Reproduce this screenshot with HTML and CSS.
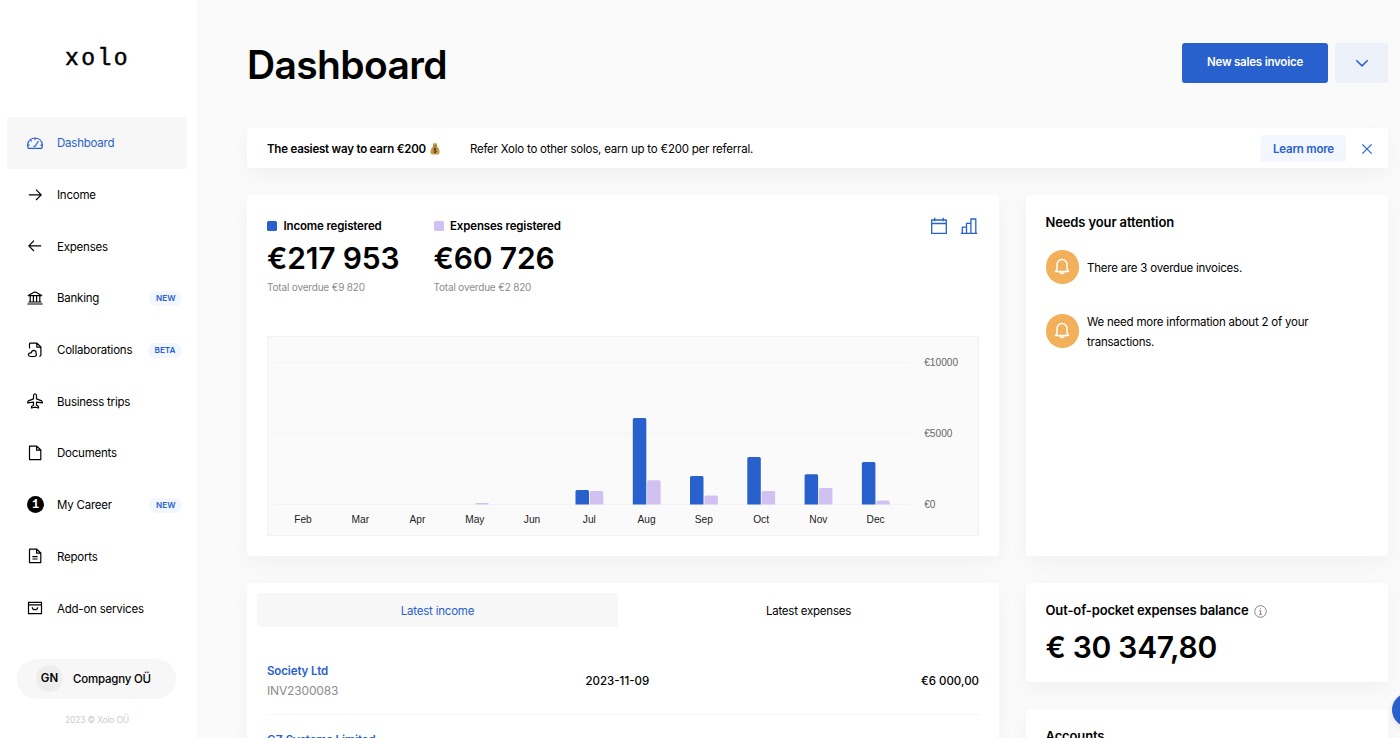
FILE: index.html
```html
<!DOCTYPE html>
<html lang="en">
<head>
    <meta charset="UTF-8">
    <meta name="viewport" content="width=device-width, initial-scale=1.0">
    <title>Dashboard</title>
    <link rel="stylesheet" href="styles.css">
</head>
<body>
    <aside class="sidebar">
        <div class="logo">xolo</div>

        <nav class="menu">
            <a class="menu-item active">
                <svg class="icon" viewBox="0 0 16 16"><path d="M1.400 13.300q-1-1.500-.7-3.700C1.200 5.600 4.300 3 8 3s6.800 2.600 7.300 6.600q.3 2.200-.7 3.700zM8 3v2M3.500 5.200l1.200 1.200M.8 10.200h1.700M13.500 10.200h1.700M6.700 10.800q.3 1 1.400.5l3.400-5.300"/></svg>
                <span class="label">Dashboard</span>
            </a>
            <a class="menu-item">
                <svg class="icon" viewBox="0 0 16 16"><path d="M1.800 7.800h12.400M9 2.600l5.200 5.200L9 13"/></svg>
                <span class="label">Income</span>
            </a>
            <a class="menu-item">
                <svg class="icon" viewBox="0 0 16 16"><path d="M14.200 7.800H1.800M7 2.600L1.800 7.800 7 13"/></svg>
                <span class="label">Expenses</span>
            </a>
            <a class="menu-item">
                <svg class="icon" viewBox="0 0 16 16"><path d="M.3 14h15.400M1.500 12h13M1.300 5.600h13.400L9 2.300q-1-.5-2 0zM3.200 5.600V12M6.400 5.600V12M9.600 5.600V12M12.800 5.600V12"/></svg>
                <span class="label">Banking</span>
                <span class="tag">NEW</span>
            </a>
            <a class="menu-item">
                <svg class="icon" viewBox="0 0 16 16"><path d="M2.500 6.500V2q0-.8.8-.8H10l3.900 3.700v8.200q0 1.100-1.600 1.300M9.800 1.400v3.700h3.900M3.300 14.500h4.400a2 2 0 0 0 1.300-3.200q.4-2.700-2-3-2.400 0-2.700 2.500-2.800-.2-3 1.700.1 1.800 2 2z"/></svg>
                <span class="label">Collaborations</span>
                <span class="tag">BETA</span>
            </a>
            <a class="menu-item">
                <svg class="icon" viewBox="0 0 16 16"><path d="M8 .9c-1 0-1.500.9-1.500 2v3L1.300 7.900q-.7.500-.7 1.900l5.900-.7v3l-2 1.500v1.400L8 14.200l3.500.8v-1.400l-2-1.500v-3l5.900.7q0-1.400-.7-1.900L9.500 5.900v-3c0-1.100-.5-2-1.500-2z"/></svg>
                <span class="label">Business trips</span>
            </a>
            <a class="menu-item">
                <svg class="icon" viewBox="0 0 16 16"><path d="M2.500 1.200h7.300l4 3.800v9.600H2.500zM9.600 1.300v3.900h4"/></svg>
                <span class="label">Documents</span>
            </a>
            <a class="menu-item">
                <span class="career">1</span>
                <span class="label">My Career</span>
                <span class="tag">NEW</span>
            </a>
            <a class="menu-item">
                <svg class="icon" viewBox="0 0 16 16"><path d="M2.500 1.200h7.300l4 3.800v9.600H2.500zM9.600 1.300v3.900h4M5.400 8.600h5.200M5.400 11h5.200"/></svg>
                <span class="label">Reports</span>
            </a>
            <a class="menu-item">
                <svg class="icon" viewBox="0 0 16 16"><path d="M1.500 2.300h13v11.400h-13zM1.500 4.800h13M5.300 7.200a2.700 2.500 0 0 0 5.400 0"/></svg>
                <span class="label">Add-on services</span>
            </a>
        </nav>

        <div class="company">
            <span class="avatar">GN</span>
            <span>Compagny OÜ</span>
        </div>
        <p class="copyright">2023 © Xolo OÜ</p>
    </aside>

    <main class="content">
        <header class="page-header">
            <h1>Dashboard</h1>
            <div class="actions">
                <button class="btn-primary">New sales invoice</button>
                <button class="btn-more">
                    <svg width="14" height="14" viewBox="0 0 14 14"><path d="M1.300 4.300L7 9.900l5.700-5.600"/></svg>
                </button>
            </div>
        </header>

        <!-- Referral banner -->
        <section class="card banner">
            <strong>The easiest way to earn €200</strong>
            <svg class="moneybag" width="10" height="12" viewBox="0 0 10 12">
                <path fill="#c39c4c" d="M2.700.6q2.300-.8 4.600 0L6.600 2.700Q9.600 5.500 9.600 9q0 2.600-2.200 2.600H2.600Q.4 11.600.4 9q0-3.500 3-6.300z"/>
                <path fill="#7d6230" d="M3 2.400h4v.9H3z"/>
                <path fill="none" stroke="#3f3010" stroke-width=".8" d="M6.500 5.900Q5 5 3.900 5.900q-.5 1.100 1.100 1.500 1.800.4 1.400 1.500-1.400 1.100-3 0M5 4.600v5.600"/>
            </svg>
            <span class="banner-text">Refer Xolo to other solos, earn up to €200 per referral.</span>
            <button class="btn-light">Learn more</button>
            <svg class="close" width="12" height="12" viewBox="0 0 12 12"><path d="M1.300 1.300l9.400 9.400M10.700 1.300l-9.400 9.400"/></svg>
        </section>

        <div class="grid">
            <div class="column">
                <section class="card overview">
                    <div class="totals">
                        <div class="total">
                            <h3><i class="dot income"></i>Income registered</h3>
                            <p class="amount">€217 953</p>
                            <p class="overdue">Total overdue €9 820</p>
                        </div>
                        <div class="total">
                            <h3><i class="dot expenses"></i>Expenses registered</h3>
                            <p class="amount">€60 726</p>
                            <p class="overdue">Total overdue €2 820</p>
                        </div>
                        <div class="tools">
                            <svg width="18" height="18" viewBox="0 0 18 18"><path d="M1.700 3h14.600v13.400H1.700zM1.700 6.500h14.600M4.700.8v3.400M13.300.8v3.400"/></svg>
                            <svg width="18" height="18" viewBox="0 0 18 18"><path d="M.8 16.400h16.400M2.300 16.400v-6.200h4.200v6.200M6.500 16.400V6.300h4.400v10.100M10.900 16.400V2h4.900v14.400"/></svg>
                        </div>
                    </div>

                    <svg class="chart" width="712" height="200" viewBox="1 1 710 198">
                        <g class="lines">
                            <path d="M7 26.500h637M7 97.500h637M7 168.500h637"/>
                        </g>
                        <g class="bar-income">
                            <path d="M308.500 168.500v-13q0-1.500 1.500-1.500h10.500q1.500 0 1.500 1.500v13z"/>
                            <path d="M365.800 168.500v-85q0-1.500 1.500-1.500h10.500q1.500 0 1.500 1.500v85z"/>
                            <path d="M423 168.500v-27q0-1.500 1.500-1.500H435q1.500 0 1.500 1.500v27z"/>
                            <path d="M480.300 168.500v-46q0-1.500 1.500-1.500h10.500q1.500 0 1.500 1.500v46z"/>
                            <path d="M537.600 168.500v-28.700q0-1.500 1.500-1.500h10.500q1.500 0 1.500 1.500v28.700z"/>
                            <path d="M594.900 168.500v-41q0-1.500 1.500-1.500h10.500q1.500 0 1.500 1.500v41z"/>
                        </g>
                        <g class="bar-expenses">
                            <path d="M208.300 168.500v-.5q0-1 1-1h11.500q1 0 1 1v.5z"/>
                            <path d="M322.800 168.500v-12q0-1.500 1.500-1.500h10.500q1.500 0 1.500 1.500v12z"/>
                            <path d="M380.100 168.500v-22.700q0-1.500 1.500-1.500h10.500q1.500 0 1.500 1.500v22.700z"/>
                            <path d="M437.400 168.500v-7.500q0-1.500 1.500-1.500h10.500q1.500 0 1.500 1.500v7.500z"/>
                            <path d="M494.600 168.500v-12q0-1.500 1.500-1.500h10.500q1.500 0 1.500 1.500v12z"/>
                            <path d="M551.900 168.500v-15q0-1.500 1.500-1.500h10.500q1.500 0 1.500 1.500v15z"/>
                            <path d="M609.200 168.500v-2.500q0-1.500 1.500-1.500h10.500q1.500 0 1.500 1.500v2.500z"/>
                        </g>
                        <g class="months">
                            <text x="36" y="187">Feb</text>
                            <text x="93.300" y="187">Mar</text>
                            <text x="150.500" y="187">Apr</text>
                            <text x="207.800" y="187">May</text>
                            <text x="265" y="187">Jun</text>
                            <text x="322.300" y="187">Jul</text>
                            <text x="379.600" y="187">Aug</text>
                            <text x="436.900" y="187">Sep</text>
                            <text x="494.100" y="187">Oct</text>
                            <text x="551.400" y="187">Nov</text>
                            <text x="608.600" y="187">Dec</text>
                        </g>
                        <g class="scale">
                            <text x="657.200" y="30">€10000</text>
                            <text x="657.200" y="101">€5000</text>
                            <text x="657.200" y="172">€0</text>
                        </g>
                    </svg>
                </section>

                <section class="card latest">
                    <div class="tabs">
                        <a class="tab active">Latest income</a>
                        <a class="tab">Latest expenses</a>
                    </div>
                    <div class="invoice">
                        <div>
                            <a class="client">Society Ltd</a>
                            <p class="number">INV2300083</p>
                        </div>
                        <span class="date">2023-11-09</span>
                        <span class="sum">€6 000,00</span>
                    </div>
                    <div class="invoice">
                        <div>
                            <a class="client">GZ Systems Limited</a>
                        </div>
                    </div>
                </section>
            </div>

            <div class="column">
                <section class="card attention">
                    <h2>Needs your attention</h2>
                    <div class="alert">
                        <span class="bell"><svg width="18" height="18" viewBox="0 0 18 18"><path d="M2.500 13.400h13L14 11.200V6.500a5 5 0 0 0-10 0v4.700zM7 13.600a2 2 0 0 0 4 0"/></svg></span>
                        <p>There are 3 overdue invoices.</p>
                    </div>
                    <div class="alert">
                        <span class="bell"><svg width="18" height="18" viewBox="0 0 18 18"><path d="M2.500 13.400h13L14 11.200V6.500a5 5 0 0 0-10 0v4.700zM7 13.600a2 2 0 0 0 4 0"/></svg></span>
                        <p>We need more information about 2 of your transactions.</p>
                    </div>
                </section>

                <section class="card balance">
                    <h2>Out-of-pocket expenses balance
                        <svg class="info" width="13" height="13" viewBox="0 0 13 13"><circle cx="6.500" cy="6.500" r="5.800"/><path d="M5.300 5.700h1.300v3.600M5.200 9.400h2.700M6.500 3.300v1"/></svg>
                    </h2>
                    <p class="amount">€ 30 347,80</p>
                </section>

                <section class="card accounts">
                    <h2>Accounts</h2>
                </section>
            </div>
        </div>
    </main>

    <div class="chat"></div>
</body>
</html>
```
FILE: styles.css
```css
* {
    box-sizing: border-box;
}
body {
    margin: 0;
    height: 738px;
    overflow: hidden;
    display: flex;
    font-family: Inter, "Liberation Sans", sans-serif;
    font-size: 11.5px;
    letter-spacing: -0.22px;
    color: #000;
    background-color: #fafafa;
}
h1, h2, h3, p {
    margin: 0;
}
svg {
    flex: none;
    fill: none;
    stroke-linejoin: round;
}
button {
    border: none;
    font-family: inherit;
    font-size: 11.5px;
    font-weight: 600;
    letter-spacing: inherit;
    cursor: pointer;
}

/* Sidebar */
.sidebar {
    width: 197px;
    flex: none;
    background-color: #fff;
}
.logo {
    height: 117px;
    padding: 43px 2px 0 0;
    font-family: "Liberation Mono", monospace;
    font-size: 23px;
    line-height: 33px;
    letter-spacing: 2.4px;
    text-align: center;
    -webkit-text-stroke: 0.5px #000;
}
.menu {
    padding: 0 10px 0 7px;
}
.menu-item {
    display: flex;
    align-items: center;
    height: 51.7px;
    padding: 0 5px 0 20px;
    border-radius: 3px;
}
.menu-item.active {
    background-color: #f7f7f7;
    color: #2860ce;
}
.icon {
    width: 16px;
    height: 16px;
    margin-right: 14px;
    stroke: currentColor;
    stroke-width: 1.2;
}
.label {
    padding-top: 1px;
}
.career {
    width: 17px;
    height: 17px;
    margin-right: 13px;
    border-radius: 50%;
    background-color: #000;
    color: #fff;
    font-family: "Liberation Mono", monospace;
    font-size: 12px;
    font-weight: bold;
    line-height: 19px;
    letter-spacing: 0;
    text-align: center;
}
.tag {
    margin: 1px 0 0 auto;
    padding: 0 6.5px;
    border-radius: 8px;
    background-color: #f2f6fe;
    color: #2860ce;
    font-size: 8.2px;
    font-weight: 600;
    line-height: 15px;
    letter-spacing: 0;
}
.company {
    display: flex;
    align-items: center;
    width: 159px;
    height: 40px;
    margin: 25px 0 0 17px;
    padding-left: 19px;
    border-radius: 20px;
    background-color: #f7f7f7;
    font-weight: 500;
}
.avatar {
    width: 27px;
    margin-right: 10px;
    border-radius: 50%;
    background-color: #eee;
    font-weight: 600;
    line-height: 27px;
    letter-spacing: 0;
    text-align: center;
}
.copyright {
    margin-top: 15px;
    padding-right: 3px;
    color: #ccc;
    font-size: 8.5px;
    line-height: 12px;
    letter-spacing: -0.2px;
    text-align: center;
}

/* Content */
.content {
    flex: 1;
    padding: 43px 12px 0 50px;
}
.page-header {
    display: flex;
    justify-content: space-between;
    height: 85px;
}
h1 {
    font-size: 39px;
    font-weight: 600;
    line-height: 43px;
    letter-spacing: -0.65px;
}
.actions {
    display: flex;
    gap: 7px;
    height: 40px;
}
.btn-primary {
    width: 146px;
    padding-bottom: 4px;
    border-radius: 3px;
    background-color: #2860ce;
    color: #fff;
}
.btn-more {
    width: 53px;
    padding: 2px 0 0;
    border-radius: 3px;
    background-color: #edf1fa;
    stroke: #2860ce;
    stroke-width: 1.5;
}
.card {
    border-radius: 3px;
    background-color: #fff;
    box-shadow: 0 7px 20px rgba(0, 0, 0, 0.04);
}
.banner {
    display: flex;
    align-items: center;
    height: 40px;
    padding: 1px 15px 0 20px;
}
.banner strong {
    font-weight: 600;
}
.moneybag {
    margin: 0 30px 0 4px;
}
.btn-light {
    width: 85px;
    height: 27px;
    margin-left: auto;
    padding: 0;
    border-radius: 2px;
    background-color: #f2f6fe;
    color: #2860ce;
}
.close {
    margin-left: 15px;
    stroke: #2860ce;
    stroke-width: 1.2;
}
.grid {
    display: grid;
    grid-template-columns: 752px 1fr;
    gap: 26.5px;
    margin-top: 27px;
}
.column {
    display: flex;
    flex-direction: column;
    gap: 27px;
}

/* Overview */
.overview {
    height: 361px;
    padding: 23px 20px 0;
}
.totals {
    display: flex;
    height: 118px;
}
.total {
    width: 166.5px;
}
h3 {
    display: flex;
    align-items: center;
    font-size: 11.5px;
    font-weight: 600;
    line-height: 16px;
    letter-spacing: -0.15px;
    white-space: nowrap;
}
.dot {
    width: 10px;
    height: 10px;
    margin-right: 6.5px;
    border-radius: 1.5px;
}
.dot.income {
    background-color: #2860ce;
}
.dot.expenses {
    background-color: #d1c1f3;
}
.amount {
    margin-top: 5px;
    font-size: 30px;
    font-weight: 600;
    line-height: 38px;
    letter-spacing: -0.15px;
    white-space: nowrap;
}
.overdue {
    margin-top: 3px;
    color: #8c8c8c;
    font-size: 10px;
    line-height: 14px;
    letter-spacing: -0.18px;
}
.tools {
    display: flex;
    gap: 12px;
    margin: -1px 1px 0 auto;
    stroke: #2860ce;
    stroke-width: 1.3;
}
.chart {
    display: block;
    border: 1px solid #f2f2f2;
    background-color: #fafafa;
    font-size: 10.2px;
    letter-spacing: 0;
}
.lines {
    stroke: #f3f3f3;
}
.bar-income {
    fill: #2860ce;
}
.bar-expenses {
    fill: #d1c1f3;
}
.months {
    fill: #222;
    font-family: "Liberation Sans", sans-serif;
    text-anchor: middle;
}
.scale {
    fill: #666;
    font-family: "Liberation Sans", sans-serif;
}

/* Latest invoices */
.latest {
    height: 155px;
    padding: 10px 0 0 10px;
}
.tabs {
    display: flex;
    height: 34px;
    margin-bottom: 20px;
}
.tab {
    width: 361px;
    border-radius: 3px;
    line-height: 36px;
    text-align: center;
}
.tab + .tab {
    width: 381px;
}
.tab.active {
    background-color: #f7f7f7;
    color: #2860ce;
}
.invoice {
    display: grid;
    grid-template-columns: 318.5px 1fr auto;
    align-items: center;
    height: 68px;
    margin: 0 20px 0 10px;
    border-bottom: 1px solid #f5f5f5;
    line-height: 20px;
}
.invoice + .invoice {
    align-items: start;
    height: 23px;
    padding-top: 15px;
    border-bottom: none;
}
.client {
    color: #2860ce;
    font-weight: 600;
    letter-spacing: -0.12px;
}
.number {
    color: #8c8c8c;
    font-size: 12px;
    letter-spacing: -0.15px;
}
.date, .sum {
    padding-top: 1px;
    font-weight: 500;
    letter-spacing: 0;
}

/* Right column */
h2 {
    display: flex;
    align-items: center;
    font-size: 13px;
    font-weight: 600;
    line-height: 18px;
    letter-spacing: -0.13px;
}
.attention {
    height: 361px;
    padding: 18px 20px 0;
}
.alert {
    display: flex;
    align-items: center;
    height: 34px;
    margin-top: 19px;
    line-height: 20px;
}
.alert + .alert {
    margin-top: 30px;
}
.alert p {
    width: 240px;
    padding-top: 1px;
}
.bell {
    display: flex;
    align-items: center;
    justify-content: center;
    width: 33.5px;
    height: 33.5px;
    margin-right: 8px;
    border-radius: 50%;
    background-color: #f3b05a;
    stroke: #fff;
    stroke-width: 1.5;
}
.balance {
    height: 99px;
    padding: 18px 20px 0;
}
.balance .amount {
    margin-top: 9px;
    letter-spacing: -0.3px;
}
.info {
    margin: 2px 0 0 5px;
    stroke: #777;
    stroke-width: 0.9;
}
.accounts {
    height: 29px;
    padding: 18px 20px 0;
    border-radius: 3px 3px 0 0;
}
.chat {
    position: fixed;
    right: -26px;
    bottom: 11px;
    width: 34px;
    height: 34px;
    border-radius: 50%;
    background-color: #2860ce;
    box-shadow: 0 2px 6px rgba(0, 0, 0, 0.1);
}
```
